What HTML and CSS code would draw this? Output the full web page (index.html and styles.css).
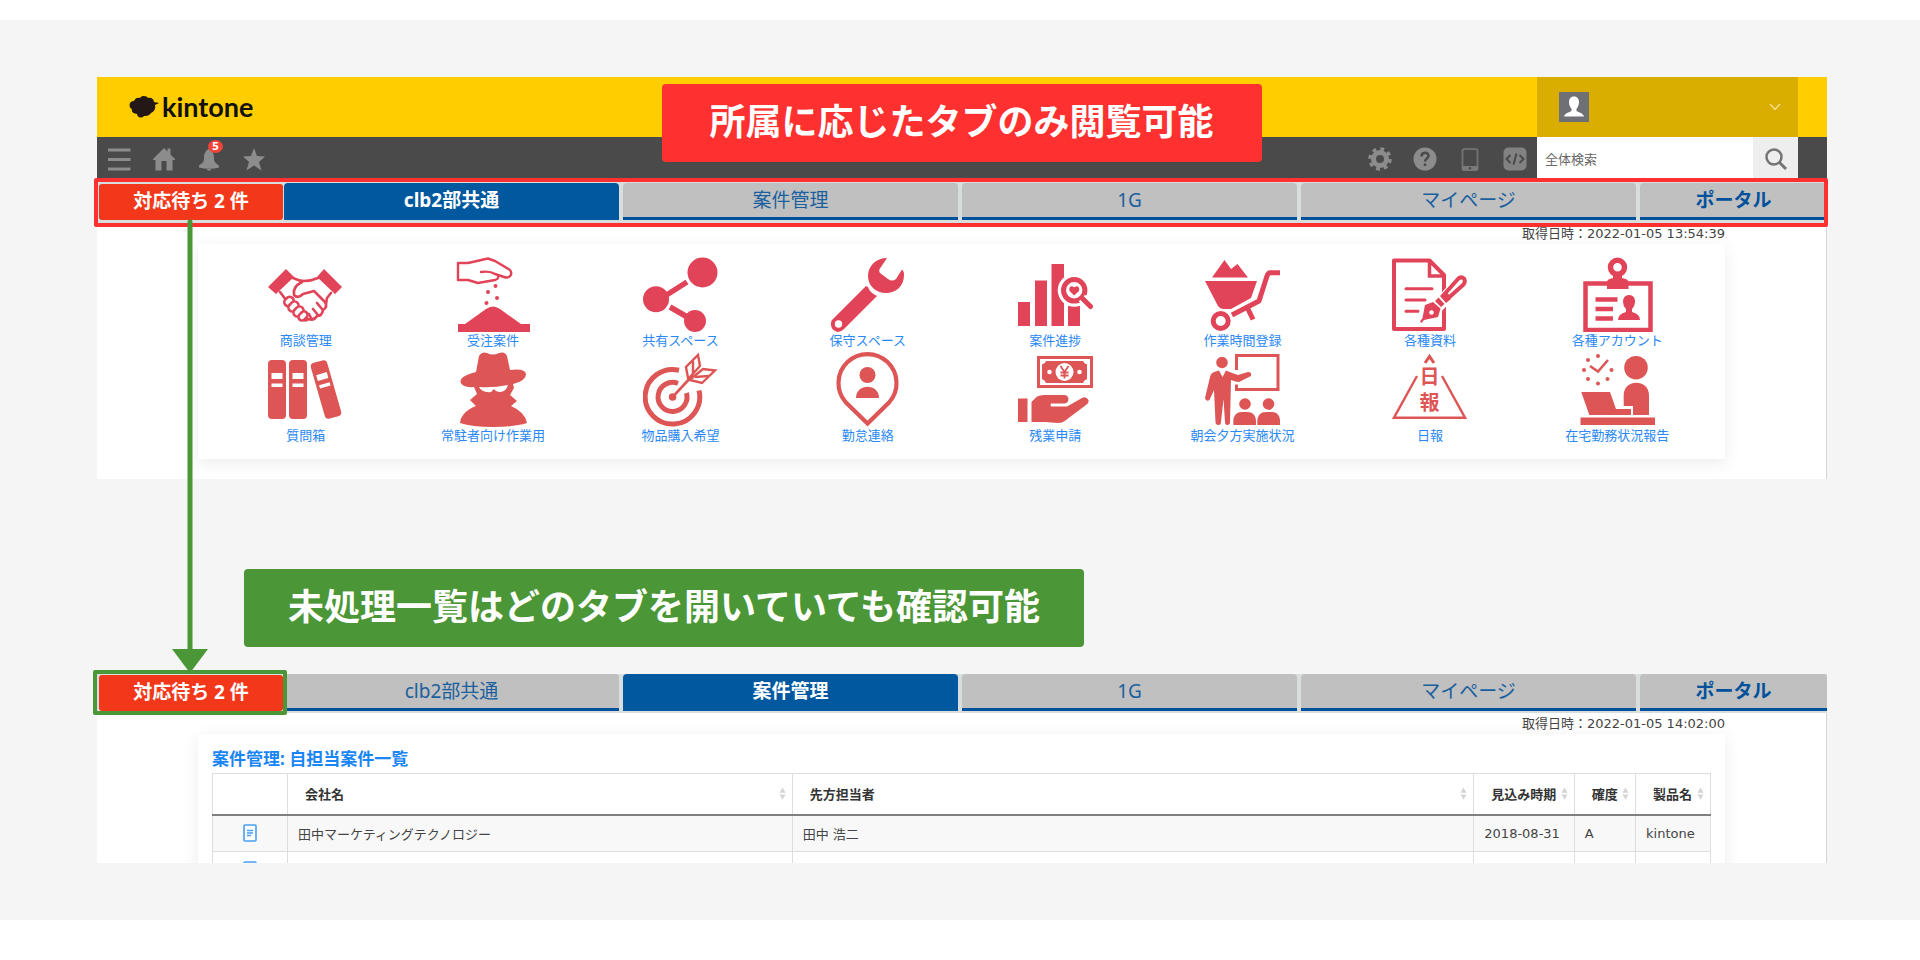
FILE: index.html
```html
<!DOCTYPE html>
<html lang="ja">
<head>
<meta charset="utf-8">
<title>kintone ポータルのタブ表示</title>
<meta name="viewport" content="width=device-width, initial-scale=1">
<link rel="stylesheet" href="styles.css">
</head>
<body>
<main class="stage">

  <section class="panel">
    <header class="brand-bar">
      <a class="brand" href="#">
        <svg class="brand-mark" viewBox="0 0 30 22" aria-hidden="true"><path d="M5 5C6 2 9 1 11 2C13-1 18 0 19 2C22 1 25 3 25 6L30 7L26 9C27 13 25 16 22 17C20 20 17 20 15 20C12 23 8 21 8 18C4 18 2 15 3 13C-1 11 0 5 5 5Z" fill="#231815"/></svg>
        <span class="brand-name">kintone</span>
      </a>
      <button class="account" type="button" aria-label="アカウント">
        <svg class="avatar" viewBox="0 0 30 30" aria-hidden="true"><rect width="30" height="30" fill="#6f6f76"/><path d="M15 4.500C18.500 4.500 20 7 20 10.500C20 13.500 18.500 15.500 17.500 17V19C20 20.500 24 21 25 24.500H5C6 21 10 20.500 12.500 19V17C11.500 15.500 10 13.500 10 10.500C10 7 11.500 4.500 15 4.500Z" fill="#fff"/></svg>
        <svg class="chevron" viewBox="0 0 12 8" aria-hidden="true"><path d="M1 1L6 6.500L11 1" fill="none" stroke="#f6df8a" stroke-width="1.500"/></svg>
      </button>
    </header>

    <div class="tool-bar">
      <nav class="tools" aria-label="メニュー">
        <button class="tool" type="button" aria-label="メニュー"><svg viewBox="0 0 24 24"><path d="M1 3H23.500M1 12.500H23.500M1 22H23.500" stroke="#8c8c8c" stroke-width="3"/></svg></button>
        <button class="tool" type="button" aria-label="ホーム"><svg viewBox="0 0 24 24"><path fill="#8c8c8c" d="M12 1L15.500 4.500V1.500H18.500V7.500L23 12V13H20.500V23.500H14.500V14H9.500V23.500H3.500V13H1V12Z"/></svg></button>
        <button class="tool" type="button" aria-label="通知"><svg viewBox="0 0 24 24"><path fill="#8c8c8c" d="M12 2C16.500 4 17 8 17 12C17 15.500 20 17 22 18.500V20.500Q12 23 2 20.500V18.500C4 17 7 15.500 7 12C7 8 7.500 4 12 2ZM9.500 22H14.500Q12 25.500 9.500 22Z"/></svg><span class="count">5</span></button>
        <button class="tool" type="button" aria-label="お気に入り"><svg viewBox="0 0 24 24"><path fill="#8c8c8c" d="M12 1L15 9L23 9.500L17 15L19.500 23.500L12 18.500L4.500 23.500L7 15L1 9.500L9 9Z"/></svg></button>
      </nav>
      <nav class="tools tools-end" aria-label="設定">
        <button class="tool" type="button" aria-label="設定"><svg viewBox="0 0 24 24"><g fill="none" stroke="#8c8c8c"><circle cx="12" cy="12" r="6.500" stroke-width="5"/><circle cx="12" cy="12" r="10" stroke-width="3.500" stroke-dasharray="3.800 4.054"/></g></svg></button>
        <button class="tool" type="button" aria-label="ヘルプ"><svg viewBox="0 0 24 24"><circle cx="12" cy="12" r="11.500" fill="#8c8c8c"/><path d="M8.500 9.500C8.500 4.500 15.500 4.500 15.500 9C15.500 11.500 12 11.500 12 14.500M12 16.500V19" fill="none" stroke="#4a4a4a" stroke-width="2.500"/></svg></button>
        <button class="tool" type="button" aria-label="モバイル"><svg viewBox="0 0 24 24"><rect x="4.500" y="2" width="15" height="21" rx="2" fill="none" stroke="#6f6f6f" stroke-width="2"/><path d="M4 19H20V22Q20 23.500 18.500 23.500H5.500Q4 23.500 4 22Z" fill="#7a7a7a"/><circle cx="12" cy="21.200" r="1.300" fill="#4a4a4a"/></svg></button>
        <button class="tool" type="button" aria-label="開発者"><svg viewBox="0 0 24 24"><rect x=".5" y=".5" width="23" height="23" rx="5" fill="#828282"/><path d="M7.500 8L3.500 12L7.500 16M16.500 8L20.500 12L16.500 16M13.500 6.500L10.500 17.500" fill="none" stroke="#4a4a4a" stroke-width="2"/></svg></button>
      </nav>
      <form class="search">
        <input class="search-field" type="text" placeholder="全体検索" aria-label="全体検索">
        <button class="search-go" type="button" aria-label="検索"><svg viewBox="0 0 24 24"><circle cx="10" cy="10" r="7.500" fill="none" stroke="#747474" stroke-width="2.500"/><path d="M15.500 15.500L22 22" stroke="#747474" stroke-width="3"/></svg></button>
      </form>
    </div>

    <nav class="tabs tabs-framed" aria-label="タブ">
      <a class="pending" href="#">対応待ち 2 件</a>
      <a class="tab tab-current" href="#" aria-current="page">clb2部共通</a>
      <a class="tab" href="#">案件管理</a>
      <a class="tab" href="#">1G</a>
      <a class="tab" href="#">マイページ</a>
      <a class="tab tab-portal" href="#">ポータル</a>
    </nav>

    <div class="panel-body">
      <p class="stamp">取得日時：2022-01-05 13:54:39</p>
      <div class="card launcher">
        <a class="app" href="#">
          <svg class="app-icon rose" viewBox="0 0 75 75"><path fill="currentColor" d="M18 12L26 20L8 37L0 30ZM56 12L74 30L67 37L49 20Z"/><g fill="#fff" stroke="currentColor" stroke-width="2.600" stroke-linecap="round" stroke-linejoin="round"><path fill="none" d="M25 21Q31 24 36 24Q43 24 50 21M12 35L15 39L18 43M63 36L59 41L58 47"/><path d="M34 25C28 28 25 33 26 38Q30 42 35 37L46 34L57 45Q60 50 55 53Q54 59 49 59Q46 64 40 62Q38 65 34 62" /><rect x="16" y="40.500" width="10" height="8" rx="4" transform="rotate(-45 21 44.500)"/><rect x="20" y="45.500" width="11" height="8" rx="4" transform="rotate(-45 25.500 49.500)"/><rect x="25" y="50.500" width="11" height="8" rx="4" transform="rotate(-45 30.500 54.500)"/><rect x="30" y="55.500" width="10" height="7" rx="3.500" transform="rotate(-45 35 59)"/><path fill="none" d="M49 46L54 52M45 52L50 58M41 57L43 61"/></g></svg>
          <span class="app-name">商談管理</span>
        </a>
        <a class="app" href="#">
          <svg class="app-icon rose" viewBox="0 0 75 75"><path fill="none" stroke="currentColor" stroke-width="2.400" stroke-linejoin="round" stroke-linecap="round" d="M2 6H12L32 1.500L39 4L54 13Q57 17 53 20Q51 21 48 20L42 18Q43 22 39 23L22 26L12 23H2ZM25 15C32 14 36 15 39 17L42 18"/><g fill="currentColor"><circle cx="39.500" cy="29" r="2"/><circle cx="32" cy="35" r="2"/><circle cx="41" cy="41" r="2"/><circle cx="30.500" cy="46" r="2"/><path d="M2 75V67H9L30 52Q37 47 44 52L65 67H74V75Z"/></g></svg>
          <span class="app-name">受注案件</span>
        </a>
        <a class="app" href="#">
          <svg class="app-icon rose" viewBox="0 0 75 75"><g fill="currentColor"><circle cx="59.500" cy="15.500" r="15"/><circle cx="13" cy="42.300" r="13"/><circle cx="52" cy="64" r="11"/></g><path d="M22 39L44 25M27 50L46 61" stroke="currentColor" stroke-width="5.500"/></svg>
          <span class="app-name">共有スペース</span>
        </a>
        <a class="app" href="#">
          <svg class="app-icon rose" viewBox="0 0 75 75"><path fill="currentColor" d="M57 1C46 1 38 9 38 19C38 29 46 36 56 36C66 36 74 29 74 18Q74 14 72 12.500L66 22Q62 25 58 22L50 16Q48 13 51 10ZM36 29L38 30Q40 36 47 39L14 72Q11 75 8 75A8 8 0 0 1 2 63Z"/><circle cx="8.500" cy="67" r="3.700" fill="#fff"/></svg>
          <span class="app-name">保守スペース</span>
        </a>
        <a class="app" href="#">
          <svg class="app-icon rose" viewBox="0 0 75 75"><path fill="currentColor" d="M0 45H12V69H0ZM17 23.500H29V69H17ZM33.500 7H46V69H33.500ZM50 49H62V69H50Z"/><circle cx="56.200" cy="33.300" r="16.500" fill="#fff"/><circle cx="56.200" cy="33.300" r="10.700" fill="none" stroke="currentColor" stroke-width="5"/><path d="M64 41L73 50" stroke="#fff" stroke-width="9"/><path d="M64 41L72.500 49.500" stroke="currentColor" stroke-width="5" stroke-linecap="round"/><path fill="currentColor" d="M56.200 38.500L51.500 34Q50.500 29.500 54 29.300L56.200 30.300L58.500 29.300Q62 29.500 61 34Z"/></svg>
          <span class="app-name">案件進捗</span>
        </a>
        <a class="app" href="#">
          <svg class="app-icon rose" viewBox="0 0 75 75"><path fill="currentColor" d="M7 20.500L19.500 3L26 12L32.500 7L43 20.500ZM0 24H52L46 41L26 52H19Q15 52 13 49Z"/><path fill="none" stroke="currentColor" stroke-width="5" stroke-linejoin="round" d="M75 15.700H65Q63 16 62 19L54 44L27 58M43 52L48 62.500"/><circle cx="15.700" cy="64" r="7.500" fill="none" stroke="currentColor" stroke-width="5"/></svg>
          <span class="app-name">作業時間登録</span>
        </a>
        <a class="app" href="#">
          <svg class="app-icon rose" viewBox="0 0 75 75"><g fill="none" stroke="currentColor"><path stroke-width="4" stroke-linejoin="round" d="M2 3.500H37.500L52 18V72H2Z"/><path stroke-width="3.500" d="M37.500 4V19H52"/><path stroke-width="3" stroke-linecap="round" d="M14 31.700H40M14 43H33M14 54.300H26"/></g><path d="M28 66L36 50L68 16L76 27L44 60Z" fill="#fff"/><path fill="none" stroke="currentColor" stroke-width="4" stroke-linejoin="round" stroke-linecap="round" d="M53 36.500L66 22Q69 19 72 21.500Q74 25 71 28L57 40.500Z"/><path fill="currentColor" d="M52 35L59 42L54 46L48 39ZM46.500 40.500L52.500 47L49 50L43 44ZM41 45L48.500 51.500L46 60L32 63L29.500 66L28 64.500L30.500 61L33 48Z"/><circle cx="39.500" cy="55.500" r="2.300" fill="#fff"/></svg>
          <span class="app-name">各種資料</span>
        </a>
        <a class="app" href="#">
          <svg class="app-icon rose" viewBox="0 0 75 75"><g fill="none" stroke="currentColor"><rect x="5.500" y="26.500" width="65" height="46.500" stroke-width="4.500"/><circle cx="37.500" cy="10.300" r="7" stroke-width="5.500"/><path stroke-width="4.500" d="M15.500 42.500H37.500M15.500 52H33M15.500 61.500H33"/></g><path fill="currentColor" d="M33 16H42V21Q48.500 22 48.500 25V32H27V25Q27 22 33 21ZM49 38C53 38 55.500 41 55 45Q55 49 52 52V55Q60 57 60 63H38Q38 57 46 55V52Q43 49 43 45C43 41 45 38 49 38Z"/></svg>
          <span class="app-name">各種アカウント</span>
        </a>

        <a class="app" href="#">
          <svg class="app-icon brick" viewBox="0 0 75 75"><rect x="0" y="8" width="18" height="59" rx="4" fill="currentColor"/><rect x="21" y="8" width="18" height="59" rx="4" fill="currentColor"/><path fill="#fff" d="M3.500 21H14.500V27H3.500ZM3.500 31.500H14.500V35H3.500ZM24.500 21H35.500V27H24.500ZM24.500 31.500H35.500V35H24.500Z"/><g transform="rotate(-16 58 37.500)"><rect x="49.500" y="8.500" width="17" height="58" rx="4" fill="currentColor"/><path fill="#fff" d="M52.500 21H63.500V27H52.500ZM52.500 31.500H63.500V35H52.500Z"/></g></svg>
          <span class="app-name">質問箱</span>
        </a>
        <a class="app" href="#">
          <svg class="app-icon brick" viewBox="0 0 75 75"><path fill="currentColor" d="M20 20L23 4Q26-1 31 1Q37 4 43 1Q49-1 51 4L54 18Q69 16 70 22Q70 29 57 32L58 36L54 43L61 49L55 54Q69 60 71 71Q58 75 37 75Q16 75 4 71Q5 60 20 54L14 48L21 42L18 35Q6 36 4.500 30Q4 24 20 20Z"/><path fill="#fff" d="M23 35Q37 36 52 33Q50 40 44 40Q40 40 38 37L35 40Q26 41 23 35Z"/></svg>
          <span class="app-name">常駐者向け作業用</span>
        </a>
        <a class="app" href="#">
          <svg class="app-icon brick" viewBox="0 0 75 75"><g fill="none" stroke="currentColor" stroke-width="5"><path d="M36 18.300A27.300 27.300 0 1 0 56 38.500"/><path d="M35 31.500A14.500 14.500 0 1 0 43.500 41"/></g><circle cx="29.600" cy="45" r="3.800" fill="currentColor"/><path d="M29.600 45L50 23" stroke="currentColor" stroke-width="2.600"/><g fill="#fff" stroke="currentColor" stroke-width="2.400" stroke-linejoin="miter"><path d="M45 26L43 15L55 3L57 14L47 25Z"/><path d="M47 28L59 31L72 18.500L60 17L49 26Z"/><path d="M50 9L50 22M52 25L66 24"/></g></svg>
          <span class="app-name">物品購入希望</span>
        </a>
        <a class="app" href="#">
          <svg class="app-icon brick" viewBox="0 0 75 75"><path fill="none" stroke="currentColor" stroke-width="4.200" d="M37.500 71.500L15.500 50A29 29 0 1 1 59.500 50Z"/><circle cx="37.500" cy="23" r="8" fill="currentColor"/><path fill="currentColor" d="M26 46C26 31 49 31 49 46Z"/></svg>
          <span class="app-name">勤怠連絡</span>
        </a>
        <a class="app" href="#">
          <svg class="app-icon brick" viewBox="0 0 75 75"><rect x="20.500" y="5.500" width="53" height="29" fill="none" stroke="currentColor" stroke-width="3"/><path fill="currentColor" d="M28 9H65Q66 12 69 12.500V27Q66 28 65 31H28Q27 28 24 27V12.500Q27 12 28 9Z"/><circle cx="46.500" cy="20" r="9" fill="#fff"/><circle cx="31.500" cy="20" r="2.300" fill="#fff"/><circle cx="61.500" cy="20" r="2.300" fill="#fff"/><path fill="none" stroke="currentColor" stroke-width="1.800" d="M42.500 14L46.500 20L50.500 14M46.500 20V26.500M42.500 20.500H50.500M42.500 23.500H50.500"/><path fill="currentColor" d="M0 46.500H9.500V70H0ZM13.500 50L19 44.500Q22 43 26 43H46Q50 43 50.500 47Q50 51.500 46 51.500H33Q32 53 33 54.500H49L64 46Q68 44 70.500 48Q71 51 68 53L48 68Q45 71 40 71L27 70H13.500Z"/></svg>
          <span class="app-name">残業申請</span>
        </a>
        <a class="app" href="#">
          <svg class="app-icon brick" viewBox="0 0 75 75"><path fill="none" stroke="currentColor" stroke-width="3" d="M31.500 18V3.500H73V37.500H31.500V32.500"/><g fill="currentColor"><circle cx="17" cy="10.500" r="5.800"/><path d="M9 20L14 18.500L17.500 25L21 18.500L27 21L33 23L43 20Q47 20 46 24L34 30Q31 30 26 28L25 70Q25 73 22.500 73Q20 73 20 70L18.500 47L16 70Q16 73 13.500 73Q10.500 73 10.500 70L9 38L4.500 48Q1 50 0 46L5 25Q6 21 9 20Z"/><circle cx="40" cy="52" r="5.800"/><circle cx="63.500" cy="52" r="5.800"/><path d="M28.500 73Q27 60 37 60H43Q52 60 51 73ZM52.500 73Q51 60 61 60H67Q76 60 75 73Z"/></g></svg>
          <span class="app-name">朝会夕方実施状況</span>
        </a>
        <a class="app" href="#">
          <svg class="app-icon brick" viewBox="0 0 75 75"><g fill="none" stroke="currentColor" stroke-width="2.400"><path d="M25 24L2 65.700H73L50 24"/><path stroke-width="3" d="M33 11L37.500 4.500L42 11"/></g><text class="seal" x="37.500" y="32" text-anchor="middle">日</text><text class="seal" x="37.500" y="58" text-anchor="middle">報</text></svg>
          <span class="app-name">日報</span>
        </a>
        <a class="app" href="#">
          <svg class="app-icon brick" viewBox="0 0 75 75"><path fill="none" stroke="currentColor" stroke-width="2.600" d="M10 14L18 19.500L28 8"/><g fill="currentColor"><circle cx="18" cy="4" r="2"/><circle cx="8" cy="8" r="2"/><circle cx="4" cy="18" r="2"/><circle cx="8" cy="27" r="2"/><circle cx="18" cy="31.500" r="2"/><circle cx="27.500" cy="27" r="2"/><circle cx="31.500" cy="18" r="2"/><circle cx="56" cy="15.700" r="11.800"/><path d="M43.700 43C43.700 26.500 69 26.500 69 43V63H53V54H43.700ZM1.300 40H30L36 57H51V63H9.300ZM.5 65.500H75V73H.5Z"/></g></svg>
          <span class="app-name">在宅勤務状況報告</span>
        </a>
      </div>
      <div class="next-card"></div>
    </div>
    <p class="banner banner-red">所属に応じたタブのみ閲覧可能</p>
  </section>

  <p class="banner banner-green">未処理一覧はどのタブを開いていても確認可能</p>

  <section class="panel panel-list">
    <nav class="tabs" aria-label="タブ">
      <a class="pending pending-framed" href="#">対応待ち 2 件</a>
      <a class="tab" href="#">clb2部共通</a>
      <a class="tab tab-current" href="#" aria-current="page">案件管理</a>
      <a class="tab" href="#">1G</a>
      <a class="tab" href="#">マイページ</a>
      <a class="tab tab-portal" href="#">ポータル</a>
    </nav>
    <div class="panel-body">
      <p class="stamp">取得日時：2022-01-05 14:02:00</p>
      <div class="card listing">
        <h2 class="listing-title"><a href="#">案件管理: 自担当案件一覧</a></h2>
        <table class="grid">
          <colgroup><col class="col-open"><col class="col-company"><col class="col-contact"><col class="col-date"><col class="col-rank"><col class="col-product"></colgroup>
          <thead>
            <tr>
              <th></th>
              <th><span class="head">会社名<svg class="sort" viewBox="0 0 8 14"><path d="M4 0L7.500 6H.5ZM4 14L.5 8H7.500Z"/></svg></span></th>
              <th><span class="head">先方担当者<svg class="sort" viewBox="0 0 8 14"><path d="M4 0L7.500 6H.5ZM4 14L.5 8H7.500Z"/></svg></span></th>
              <th><span class="head">見込み時期<svg class="sort" viewBox="0 0 8 14"><path d="M4 0L7.500 6H.5ZM4 14L.5 8H7.500Z"/></svg></span></th>
              <th><span class="head">確度<svg class="sort" viewBox="0 0 8 14"><path d="M4 0L7.500 6H.5ZM4 14L.5 8H7.500Z"/></svg></span></th>
              <th><span class="head">製品名<svg class="sort" viewBox="0 0 8 14"><path d="M4 0L7.500 6H.5ZM4 14L.5 8H7.500Z"/></svg></span></th>
            </tr>
          </thead>
          <tbody>
            <tr class="shaded">
              <td class="open"><a href="#" aria-label="詳細"><svg class="record" viewBox="0 0 14 18"><rect x="1" y="1" width="12" height="16" rx="1" fill="#fff" stroke="#4a9ff0" stroke-width="1.600"/><path d="M4 6.500H10M4 9H10M4 11.500H8" stroke="#4a9ff0" stroke-width="1.500"/></svg></a></td>
              <td>田中マーケティングテクノロジー</td><td>田中 浩二</td><td>2018-08-31</td><td>A</td><td>kintone</td>
            </tr>
            <tr>
              <td class="open"><a href="#" aria-label="詳細"><svg class="record" viewBox="0 0 14 18"><rect x="1" y="1" width="12" height="16" rx="1" fill="#fff" stroke="#4a9ff0" stroke-width="1.600"/><path d="M4 6.500H10M4 9H10M4 11.500H8" stroke="#4a9ff0" stroke-width="1.500"/></svg></a></td>
              <td></td><td></td><td></td><td></td><td></td>
            </tr>
          </tbody>
        </table>
      </div>
    </div>
  </section>

  <svg class="pointer" viewBox="0 0 36 454" aria-hidden="true"><path d="M18 3V434" stroke="#4b9636" stroke-width="5" stroke-linecap="round"/><path d="M0 430H36L18 454Z" fill="#4b9636"/></svg>
</main>
</body>
</html>
```
FILE: styles.css
```css
* { box-sizing: border-box; }

body {
  margin: 0;
  background: #fff;
  color: #444;
  font-family: "DejaVu Sans", "Noto Sans CJK JP", sans-serif;
  font-size: 13px;
}

p, h2 { margin: 0; }
a { color: inherit; text-decoration: none; }
button { border: 0; padding: 0; background: none; font: inherit; cursor: pointer; }
svg { display: block; }

.stage {
  position: relative;
  margin: 20px 0 40px;
  padding: 57px 93px 57px 97px;
  background: #f5f5f5;
}

.panel {
  position: relative;
  background: #fff;
  border-right: 1px solid #d4d8dc;
}

/* Yellow brand bar */
.brand-bar {
  display: flex;
  align-items: stretch;
  justify-content: space-between;
  height: 60px;
  margin-right: -1px;
  padding-right: 29px;
  background: #ffcd00;
}
.brand { display: flex; align-items: center; gap: 3px; padding-left: 32px; }
.brand-mark { width: 30px; height: 22px; }
.brand-name {
  color: #111;
  font-family: Lato, "Noto Sans", sans-serif;
  font-size: 27px;
  font-weight: 700;
  line-height: 32px;
}
.account {
  display: flex;
  align-items: center;
  justify-content: space-between;
  width: 261px;
  padding: 0 17px 0 22px;
  background: #d9ae00;
}
.avatar { width: 30px; height: 30px; }
.chevron { width: 12px; height: 8px; }

/* Dark tool bar */
.tool-bar {
  display: flex;
  height: 44px;
  margin-right: -1px;
  padding-right: 29px;
  background: #4a4a4a;
}
.tools { display: flex; align-items: center; gap: 21px; padding-left: 10px; }
.tools-end { margin-left: auto; padding: 0 10px 0 0; }
.tool { position: relative; width: 24px; height: 24px; }
.count {
  position: absolute;
  top: -7px;
  right: -2px;
  width: 15px;
  height: 13px;
  border-radius: 50%;
  background: #f04438;
  color: #fff;
  font-size: 10px;
  font-weight: 700;
  line-height: 13px;
}
.search { display: flex; width: 261px; background: #fff; }
.search-field {
  flex: 1;
  min-width: 0;
  border: 0;
  padding: 0 8px;
  background: #fff;
  color: #555;
  font: inherit;
}
.search-field::placeholder { color: #666; opacity: 1; }
.search-go {
  display: grid;
  place-items: center;
  width: 45px;
  background: #eee;
}
.search-go svg { width: 24px; height: 24px; }

/* Tabs */
.tabs {
  position: relative;
  display: grid;
  grid-template-columns: 187px repeat(4, 1fr) 187px;
  margin-right: -1px;
  padding-bottom: 2px;
  background: #d8dddd;
  font-family: "Noto Sans", "Noto Sans CJK JP", sans-serif;
  font-size: 19px;
  line-height: 34px;
  text-align: center;
}
.tab {
  height: 37px;
  margin-right: 4px;
  border-bottom: 3px solid #00519c;
  border-radius: 4px 4px 0 0;
  background: #c0c0c0;
  color: #1a5f9e;
}
.tab-current {
  background: #00599f;
  border-bottom-color: #00599f;
  color: #fff;
  font-weight: 700;
}
.tab-portal { margin-right: 0; color: #00519c; font-weight: 700; }
.pending {
  position: relative;
  height: 36px;
  margin: 1px 1px 0 2px;
  border-radius: 3px;
  background: #f3371b;
  color: #fff;
  font-weight: 700;
}
.tabs-framed { padding-top: 2px; padding-bottom: 3px; }
.tabs-framed::after {
  content: "";
  position: absolute;
  inset: -3px -1px -4px -3px;
  border: 4px solid #ff3030;
  border-radius: 2px;
}
.pending-framed::after {
  content: "";
  position: absolute;
  inset: -5px -4px -4px -6px;
  border: 4px solid #4b9636;
  border-radius: 2px;
}

/* Content */
.panel-body { padding: 0 101px; }
.stamp { line-height: 21px; text-align: right; }
.card { background: #fff; box-shadow: 0 4px 16px rgba(0, 0, 0, .08); }

.launcher {
  display: grid;
  grid-template-columns: repeat(8, 1fr);
  row-gap: 2px;
  padding: 13px 14px 14px;
}
.app {
  display: flex;
  flex-direction: column;
  align-items: center;
  color: #2a88f5;
}
.app-icon { width: 75px; height: 75px; }
.app-name { line-height: 18px; white-space: nowrap; }
.rose { color: #e14458; }
.brick { color: #dd5555; }
.seal {
  fill: currentColor;
  font-family: "Noto Sans CJK JP", sans-serif;
  font-size: 20px;
  font-weight: 700;
}
.next-card { height: 5px; margin-top: 15px; background: #fff; }

/* Callouts */
.banner {
  height: 78px;
  border-radius: 4px;
  color: #fff;
  font-family: "Noto Sans CJK JP", sans-serif;
  font-size: 36px;
  font-weight: 700;
  line-height: 70px;
  text-align: center;
}
.banner-red {
  position: absolute;
  top: 7px;
  left: 50%;
  width: 600px;
  margin-left: -300px;
  background: #ff3030;
}
.banner-green {
  width: 840px;
  margin: 90px 0 27px 147px;
  background: #4b9636;
}
.pointer {
  position: absolute;
  top: 199px;
  left: 172px;
  width: 36px;
  height: 454px;
}

/* Record list: the panel cuts off partway through the second row */
.panel-list { max-height: 189px; clip-path: inset(-10px -10px 0 -10px); }
.listing { padding: 13px 14px 14px; }
.listing-title {
  margin-bottom: 2px;
  color: #1a85f5;
  font-family: "Noto Sans", "Noto Sans CJK JP", sans-serif;
  font-size: 17px;
  line-height: 24px;
}
.grid { width: 100%; border-collapse: collapse; table-layout: fixed; }
.col-open { width: 5%; }
.col-company { width: 33.7%; }
.col-contact { width: 45.5%; }
.col-date { width: 6.7%; }
.col-rank { width: 4.1%; }
.col-product { width: 5%; }
.grid th, .grid td { border: 1px solid #dedede; text-align: left; }
.grid th {
  height: 41px;
  padding: 0 6px 0 17px;
  border-bottom: 2px solid #808080;
  color: #333;
  font-weight: 700;
}
.grid td { height: 37px; padding: 0 10px; }
.grid .open { padding: 0; }
.head { display: flex; align-items: center; justify-content: space-between; white-space: nowrap; }
.sort { width: 7px; height: 13px; fill: #d5d5d5; }
.record { width: 14px; height: 18px; margin: 0 auto; }
.shaded { background: #f8f8f8; }
```
